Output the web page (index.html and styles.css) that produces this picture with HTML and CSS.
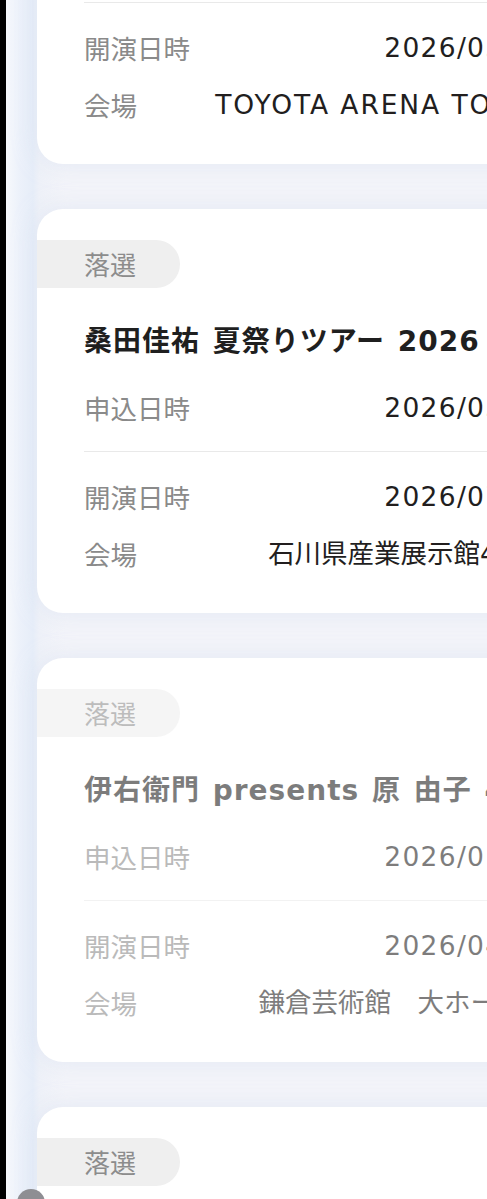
FILE: index.html
```html
<!DOCTYPE html>
<html lang="ja">
<head>
<meta charset="utf-8">
<title>抽選結果</title>
<link rel="stylesheet" href="styles.css">
</head>
<body>
<div class="screen">
  <div class="list">
    <article class="card">
      <span class="status">落選</span>
      <h2 class="title">桑田佳祐 LIVE TOUR 2026</h2>
      <dl class="rows">
        <div class="row row--apply"><dt>申込日時</dt><dd class="val--latin">2026/02/14</dd></div>
        <div class="row row--show"><dt>開演日時</dt><dd class="val--latin">2026/05/23</dd></div>
        <div class="row row--venue"><dt>会場</dt><dd class="val--latin val--wide">TOYOTA ARENA TOKYO</dd></div>
      </dl>
    </article>

    <article class="card">
      <span class="status">落選</span>
      <h2 class="title">桑田佳祐 夏祭りツアー 2026</h2>
      <dl class="rows">
        <div class="row row--apply"><dt>申込日時</dt><dd class="val--latin">2026/03/01</dd></div>
        <div class="row row--show"><dt>開演日時</dt><dd class="val--latin">2026/07/18</dd></div>
        <div class="row row--venue"><dt>会場</dt><dd>石川県産業展示館4号館</dd></div>
      </dl>
    </article>

    <article class="card card--muted">
      <span class="status">落選</span>
      <h2 class="title">伊右衛門 presents 原 由子 40周年記念コンサート</h2>
      <dl class="rows">
        <div class="row row--apply"><dt>申込日時</dt><dd class="val--latin">2026/01/20</dd></div>
        <div class="row row--show"><dt>開演日時</dt><dd class="val--latin">2026/04/11</dd></div>
        <div class="row row--venue"><dt>会場</dt><dd>鎌倉芸術館　大ホール席</dd></div>
      </dl>
    </article>

    <article class="card">
      <span class="status">落選</span>
      <h2 class="title">桑田佳祐 LIVE TOUR 2025</h2>
      <dl class="rows">
        <div class="row row--apply"><dt>申込日時</dt><dd class="val--latin">2025/12/05</dd></div>
        <div class="row row--show"><dt>開演日時</dt><dd class="val--latin">2026/03/08</dd></div>
        <div class="row row--venue"><dt>会場</dt><dd>横浜アリーナ</dd></div>
      </dl>
    </article>
  </div>
  <span class="fab"></span>
</div>
</body>
</html>
```

FILE: styles.css
```css
html, body {
  margin: 0;
  padding: 0;
}

body {
  background: #000;
  width: 487px;
  height: 1199px;
  overflow: hidden;
  font-family: "Noto Sans CJK JP", "Noto Sans", sans-serif;
}

.screen {
  position: relative;
  margin-left: 6px;
  height: 1199px;
  overflow: hidden;
  padding-left: 31px;
  background: linear-gradient(to right, #f7f9fc 0, #ecf1fa 14px, #e6edf8 27px, #eef1f8 33px, #f3f4f9 60px);
}

.list {
  display: flex;
  flex-direction: column;
  gap: 45px;
  margin-top: -240px;
}

.card {
  width: 560px;
  background: #fff;
  border-radius: 26px;
  padding: 31px 0 39px;
  box-shadow: 0 0 22px rgba(214, 222, 240, 0.55);
}

.status {
  display: block;
  width: fit-content;
  height: 48px;
  line-height: 48px;
  padding: 0 44px 0 47px;
  border-radius: 0 24px 24px 0;
  background: #efefef;
  color: #8c8c8c;
  font-size: 26px;
}

.title {
  margin: 34px 0 0 47px;
  font-family: "DejaVu Sans", "Noto Sans CJK JP", sans-serif;
  font-size: 28px;
  line-height: 40px;
  font-weight: 700;
  letter-spacing: 1px;
  word-spacing: 2px;
  color: #1f1f1f;
  white-space: nowrap;
}

.rows {
  margin: 26px 0 0 47px;
  padding-right: 47px;
}

.row {
  display: flex;
  justify-content: space-between;
  align-items: center;
  line-height: 40px;
  font-size: 26.5px;
}

.row--apply {
  padding-bottom: 23px;
  border-bottom: 1px solid #e9e9e9;
}

.row--show {
  margin-top: 25px;
}

.row--venue {
  margin-top: 17px;
}

.row dt {
  color: #8a8a8a;
  font-family: "Noto Sans CJK JP", sans-serif;
  white-space: nowrap;
}

.row dd {
  margin: 0;
  color: #221e1e;
  font-family: "DejaVu Sans", "Noto Sans CJK JP", sans-serif;
  white-space: nowrap;
}

.row dd.val--latin {
  letter-spacing: 1.3px;
}

.row dd.val--wide {
  letter-spacing: 1.9px;
}

.card--muted > * {
  opacity: 0.58;
}

.fab {
  position: absolute;
  left: 11px;
  top: 1189px;
  width: 28px;
  height: 28px;
  border-radius: 50%;
  background: #8e8e93;
}
```
